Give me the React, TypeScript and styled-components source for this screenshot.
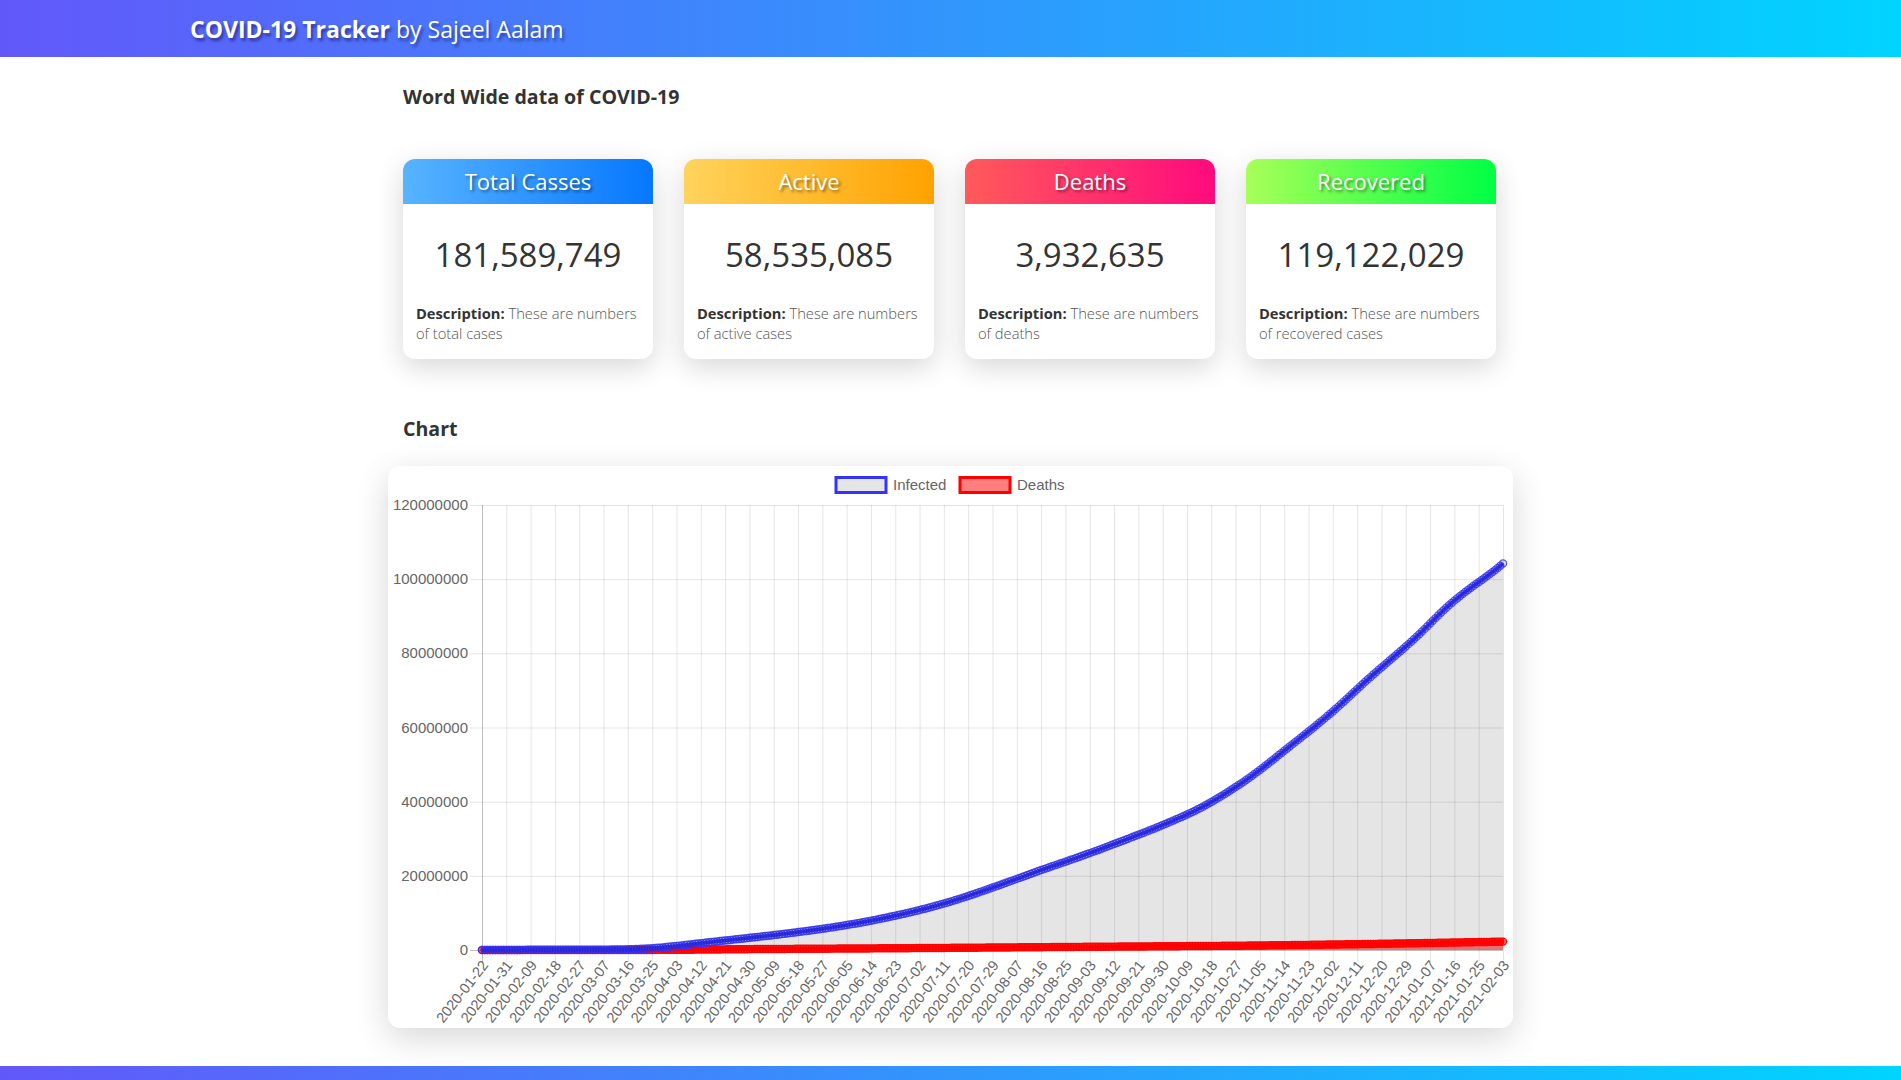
import React, { useMemo } from "react";
import styled, { createGlobalStyle } from "styled-components";

const GlobalStyle = createGlobalStyle`
  html, body { margin: 0; padding: 0; background: #fff; }
  body { font-family: "Open Sans", "Noto Sans", sans-serif; color: #333; }
  * { box-sizing: border-box; }
`;

const brandGradient = "linear-gradient(90deg, #6258fa 0%, #00d4ff 100%)";

const Page = styled.div`
  display: flex;
  flex-direction: column;
  width: 100%;
`;

const Header = styled.header`
  height: 57px;
  background: ${brandGradient};
  display: flex;
  align-items: center;
  padding-left: 190px;
`;

const Brand = styled.h1`
  margin: 0;
  font-size: 23px;
  font-weight: 400;
  line-height: 30px;
  color: #fff;
  text-shadow: 2px 3px 3px rgba(20, 20, 90, 0.55);
  b {
    font-weight: 700;
  }
`;

const Main = styled.main`
  width: 1125px;
  margin: 0 auto;
`;

const SectionTitle = styled.h2<{ $top: number; $bottom: number }>`
  margin: ${(p) => p.$top}px 15px ${(p) => p.$bottom}px;
  font-size: 19.6px;
  font-weight: 700;
  line-height: 24px;
  color: #333;
`;

const CardGrid = styled.section`
  display: grid;
  grid-template-columns: repeat(4, 250px);
  gap: 31px;
  padding: 0 15px;
`;

const Card = styled.article`
  background: #fff;
  border-radius: 12px;
  overflow: hidden;
  box-shadow: 0 8px 28px rgba(0, 0, 0, 0.16);
  display: flex;
  flex-direction: column;
`;

const CardHead = styled.div<{ $from: string; $to: string }>`
  height: 45px;
  background: linear-gradient(90deg, ${(p) => p.$from}, ${(p) => p.$to});
  color: #fff;
  font-size: 22px;
  line-height: 45px;
  text-align: center;
  text-shadow: 2px 2px 3px rgba(0, 0, 0, 0.45);
`;

const CardBody = styled.div`
  padding: 28px 13px 16px;
  display: flex;
  flex-direction: column;
`;

const Count = styled.div`
  font-size: 33px;
  line-height: 45px;
  text-align: center;
  color: #333;
  margin-bottom: 26px;
`;

const Desc = styled.p`
  margin: 0;
  font-size: 14.7px;
  line-height: 20px;
  color: #555;
  font-weight: 300;
  b {
    font-weight: 700;
    color: #333;
  }
`;

const ChartCard = styled.div`
  width: 1125px;
  height: 562px;
  background: #fff;
  border-radius: 12px;
  box-shadow: 0 10px 34px rgba(0, 0, 0, 0.16);
  margin-bottom: 38px;
  overflow: hidden;
`;

const ChartSvg = styled.svg`
  display: block;
  font-family: "Liberation Sans", Arial, sans-serif;
`;

const Footer = styled.footer`
  height: 14px;
  background: ${brandGradient};
`;

const cards = [
  { title: "Total Casses", value: "181,589,749", desc: "These are numbers of total cases", from: "#58b4ff", to: "#0677ff" },
  { title: "Active", value: "58,535,085", desc: "These are numbers of active cases", from: "#ffd35c", to: "#ffa200" },
  { title: "Deaths", value: "3,932,635", desc: "These are numbers of deaths", from: "#ff5a5a", to: "#ff0a7e" },
  { title: "Recovered", value: "119,122,029", desc: "These are numbers of recovered cases", from: "#a8ff58", to: "#00ff44" },
];

// cumulative global confirmed (millions) by day index from 2020-01-22
const infectedAnchors: [number, number][] = [
  [0, 0.000557], [10, 0.0119], [24, 0.069], [39, 0.0883], [53, 0.167], [63, 0.47],
  [70, 0.93], [84, 2.08], [100, 3.36], [114, 4.55], [131, 6.26], [145, 8.05],
  [161, 10.6], [175, 13.4], [192, 17.6], [206, 21.3], [223, 25.6], [237, 29.4],
  [253, 34.0], [267, 38.7], [284, 46.4], [298, 54.3], [314, 63.7], [328, 73.0],
  [345, 83.8], [359, 93.6], [376, 103.0], [378, 104.2],
];

const deathAnchors: [number, number][] = [
  [0, 0.000017], [39, 0.003], [70, 0.047], [84, 0.135], [100, 0.239], [131, 0.375],
  [161, 0.513], [192, 0.68], [223, 0.853], [253, 1.01], [284, 1.19], [314, 1.47],
  [345, 1.82], [378, 2.26],
];

// monotone cubic (Fritsch–Carlson) interpolation
const makeMonotone = (anchors: [number, number][]) => {
  const n = anchors.length;
  const xs = anchors.map((a) => a[0]);
  const ys = anchors.map((a) => a[1]);
  const d: number[] = [];
  for (let k = 0; k < n - 1; k++) d.push((ys[k + 1] - ys[k]) / (xs[k + 1] - xs[k]));
  const m: number[] = new Array(n).fill(0);
  m[0] = d[0];
  m[n - 1] = d[n - 2];
  for (let k = 1; k < n - 1; k++) {
    m[k] = d[k - 1] * d[k] <= 0 ? 0 : (d[k - 1] + d[k]) / 2;
  }
  for (let k = 0; k < n - 1; k++) {
    if (d[k] === 0) {
      m[k] = 0;
      m[k + 1] = 0;
      continue;
    }
    const a = m[k] / d[k];
    const b = m[k + 1] / d[k];
    const s = a * a + b * b;
    if (s > 9) {
      const t = 3 / Math.sqrt(s);
      m[k] = t * a * d[k];
      m[k + 1] = t * b * d[k];
    }
  }
  return (x: number) => {
    let k = 0;
    while (k < n - 2 && x > xs[k + 1]) k++;
    const h = xs[k + 1] - xs[k];
    const t = (x - xs[k]) / h;
    const t2 = t * t;
    const t3 = t2 * t;
    return (
      (2 * t3 - 3 * t2 + 1) * ys[k] +
      (t3 - 2 * t2 + t) * h * m[k] +
      (-2 * t3 + 3 * t2) * ys[k + 1] +
      (t3 - t2) * h * m[k + 1]
    );
  };
};

const W = 1125;
const H = 562;
const PL = 94;
const PR = 1115;
const PT = 39;
const PB = 484;
const N = 379;
const xAt = (i: number) => PL + (i * (PR - PL)) / (N - 1);
const yAt = (v: number) => PB - (v / 120) * (PB - PT);

const CovidChart: React.FC = () => {
  const data = useMemo(() => {
    const fInf = makeMonotone(infectedAnchors);
    const fDth = makeMonotone(deathAnchors);
    const inf: [number, number][] = [];
    const dth: [number, number][] = [];
    for (let i = 0; i < N; i++) {
      inf.push([xAt(i), yAt(Math.max(0, fInf(i)))]);
      dth.push([xAt(i), yAt(Math.max(0, fDth(i)))]);
    }
    const start = Date.UTC(2020, 0, 22);
    const labels: { x: number; text: string }[] = [];
    for (let k = 0; k <= 42; k++) {
      const d = new Date(start + k * 9 * 86400000);
      labels.push({ x: xAt(k * 9), text: d.toISOString().slice(0, 10) });
    }
    return { inf, dth, labels };
  }, []);

  const line = (pts: [number, number][]) =>
    pts.map((p, i) => `${i ? "L" : "M"}${p[0].toFixed(2)},${p[1].toFixed(2)}`).join(" ");
  const area = (pts: [number, number][]) => `${line(pts)} L${PR},${PB} L${PL},${PB} Z`;

  const yTicks = [0, 20, 40, 60, 80, 100, 120];

  return (
    <ChartSvg width={W} height={H} viewBox={`0 0 ${W} ${H}`}>
      {/* legend */}
      <rect x={448} y={11.5} width={50} height={15} fill="rgba(0,0,0,0.1)" stroke="#3333ff" strokeWidth={3} />
      <text x={505} y={24} fontSize={15} fill="#666">Infected</text>
      <rect x={572} y={11.5} width={50} height={15} fill="rgba(255,0,0,0.5)" stroke="#ff0000" strokeWidth={3} />
      <text x={629} y={24} fontSize={15} fill="#666">Deaths</text>

      {/* horizontal grid + y labels */}
      {yTicks.map((t) => (
        <g key={t}>
          <line
            x1={82}
            x2={PR}
            y1={yAt(t) + 0.5}
            y2={yAt(t) + 0.5}
            stroke={t === 0 ? "rgba(0,0,0,0.25)" : "rgba(0,0,0,0.1)"}
            strokeWidth={1}
          />
          <text x={80} y={yAt(t) + 5} fontSize={15} fill="#666" textAnchor="end">
            {t === 0 ? "0" : `${t}000000`}
          </text>
        </g>
      ))}

      {/* vertical grid + x labels */}
      {data.labels.map((l, k) => (
        <g key={l.text}>
          <line
            x1={l.x + 0.5}
            x2={l.x + 0.5}
            y1={PT}
            y2={PB + 12}
            stroke={k === 0 ? "rgba(0,0,0,0.25)" : "rgba(0,0,0,0.1)"}
            strokeWidth={1}
          />
          <text
            transform={`translate(${l.x + 4}, ${PB + 13}) rotate(-52)`}
            fontSize={14.5}
            fill="#666"
            textAnchor="end"
            dominantBaseline="middle"
          >
            {l.text}
          </text>
        </g>
      ))}

      {/* fills */}
      <path d={area(data.dth)} fill="rgba(255,0,0,0.5)" />
      <path d={area(data.inf)} fill="rgba(0,0,0,0.1)" />

      {/* deaths line + points */}
      <path d={line(data.dth)} fill="none" stroke="#ff0000" strokeWidth={3.75} strokeLinejoin="round" />
      {data.dth.map((p, i) => (
        <circle key={`d${i}`} cx={p[0]} cy={p[1]} r={3.6} fill="rgba(255,0,0,0.5)" stroke="#ff0000" strokeWidth={1.25} />
      ))}

      {/* infected line + points */}
      <path d={line(data.inf)} fill="none" stroke="#3333ff" strokeWidth={3.75} strokeLinejoin="round" />
      {data.inf.map((p, i) => (
        <circle
          key={`i${i}`}
          cx={p[0]}
          cy={p[1]}
          r={3.6}
          fill="rgba(0,0,0,0.1)"
          stroke="rgba(51,51,255,0.85)"
          strokeWidth={1.25}
        />
      ))}
    </ChartSvg>
  );
};

export default function App() {
  return (
    <Page>
      <GlobalStyle />
      <Header>
        <Brand>
          <b>COVID-19 Tracker</b> by Sajeel Aalam
        </Brand>
      </Header>
      <Main>
        <SectionTitle $top={28} $bottom={50}>
          Word Wide data of COVID-19
        </SectionTitle>
        <CardGrid>
          {cards.map((c) => (
            <Card key={c.title}>
              <CardHead $from={c.from} $to={c.to}>
                {c.title}
              </CardHead>
              <CardBody>
                <Count>{c.value}</Count>
                <Desc>
                  <b>Description:</b> {c.desc}
                </Desc>
              </CardBody>
            </Card>
          ))}
        </CardGrid>
        <SectionTitle $top={58} $bottom={25}>
          Chart
        </SectionTitle>
        <ChartCard>
          <CovidChart />
        </ChartCard>
      </Main>
      <Footer />
    </Page>
  );
}
